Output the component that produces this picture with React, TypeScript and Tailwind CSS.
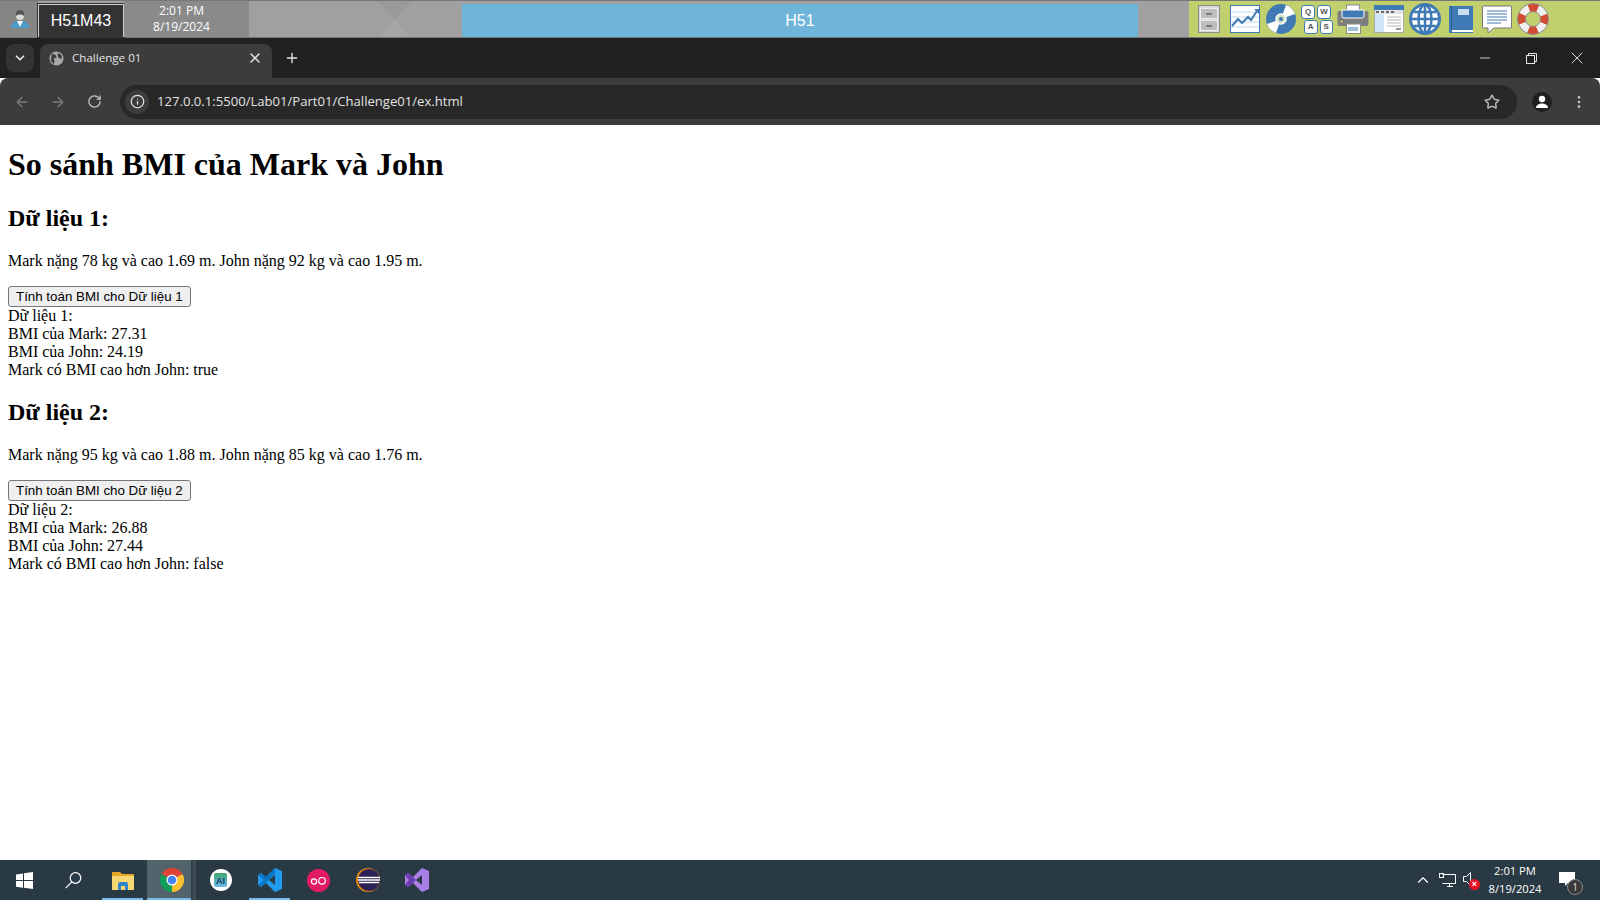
import { ChevronDown, X, Plus, ArrowLeft, ArrowRight, RotateCw, Info, Star, EllipsisVertical, Minus, ChevronUp } from "lucide-react";

const serif = "font-['Liberation_Serif','Times_New_Roman',serif]";
const sans = "font-['Liberation_Sans',Arial,sans-serif]";
const ui = "font-['Open_Sans','Noto_Sans',sans-serif]";

const UserIcon = () => (
  <svg width="18" height="20" viewBox="0 0 18 20">
    <path d="M0 19c0-4 2-6 6-7h6c4 1 6 3 6 7z" fill="#4c9cc9" />
    <path d="M6 12l3 6 3-6z" fill="#f4f4f4" />
    <circle cx="9" cy="7" r="4" fill="#d9d9d9" />
    <path d="M5 7c-1-4 1-6 4-6s5 2 4 6c-2-2-6-2-8 0z" fill="#555" />
  </svg>
);

const BarPattern = () => (
  <svg width="46" height="36" viewBox="0 0 46 36">
    <path d="M0 0h36L18 18z" fill="#999999" />
    <path d="M2 36L18 19l16 17z" fill="#a6a6a6" />
  </svg>
);

const CabinetIcon = () => (
  <svg width="22" height="28" viewBox="0 0 22 28">
    <rect x="0.500" y="0.500" width="21" height="27" fill="#d9d9d9" stroke="#8a8a8a" />
    <rect x="2.500" y="3.500" width="17" height="10" fill="#bdbdbd" stroke="#eee" />
    <rect x="2.500" y="15.500" width="17" height="10" fill="#bdbdbd" stroke="#eee" />
    <rect x="8" y="8" width="6" height="2" rx="1" fill="#777" />
    <rect x="8" y="20" width="6" height="2" rx="1" fill="#777" />
  </svg>
);

const ChartIcon = () => (
  <svg width="30" height="28" viewBox="0 0 30 28">
    <rect x="0.500" y="0.500" width="29" height="27" fill="#fff" stroke="#3f7ab5" />
    <path d="M1 7h28M1 12h28M1 17h28M1 22h28" stroke="#c3d8ea" />
    <path d="M2 21l6-7 4 4 6-6 3 3 6-9" fill="none" stroke="#3f7ab5" strokeWidth="2" />
    <path d="M24 4h5v5z" fill="#3f7ab5" />
  </svg>
);

const DiscIcon = () => (
  <svg width="30" height="30" viewBox="0 0 30 30">
    <circle cx="15" cy="15" r="15" fill="#3f7ab5" />
    <path d="M15 15L20 1a15 15 0 0 1 9 9zM15 15L1 20a15 15 0 0 0 9 9z" fill="#fff" />
    <circle cx="15" cy="15" r="5" fill="#cfe2c0" stroke="#fff" strokeWidth="1.500" />
    <circle cx="15" cy="15" r="2" fill="#3f7ab5" />
  </svg>
);

const KeyCap = ({ label }: { label: string }) => (
  <div className={`flex h-[14px] w-[14px] items-center justify-center rounded-[3px] border border-[#3f7ab5] bg-white text-[8px] font-bold text-[#555] ${sans}`}>
    {label}
  </div>
);

const KeysIcon = () => (
  <div className="flex w-[32px] flex-col gap-[1px]">
    <div className="flex gap-[2px]">
      <KeyCap label="Q" />
      <KeyCap label="W" />
    </div>
    <div className="flex gap-[2px] pl-[3px]">
      <KeyCap label="A" />
      <KeyCap label="S" />
    </div>
  </div>
);

const PrinterIcon = () => (
  <svg width="32" height="30" viewBox="0 0 32 30">
    <rect x="9.500" y="1" width="13" height="8" fill="#fff" stroke="#8a8a8a" />
    <rect x="0.500" y="7" width="31" height="15" rx="2" fill="#7d7d7d" />
    <path d="M5 6h22v6a2 2 0 0 1-2 2H7a2 2 0 0 1-2-2z" fill="#3f7ab5" stroke="#fff" />
    <rect x="3" y="17" width="3" height="1" fill="#d8d040" />
    <rect x="9.500" y="20" width="14" height="9.500" fill="#fff" stroke="#8a8a8a" />
    <path d="M11 24h10M11 26h10" stroke="#3f7ab5" />
  </svg>
);

const WindowIcon = () => (
  <svg width="30" height="28" viewBox="0 0 30 28">
    <rect x="0.500" y="0.500" width="29" height="27" fill="#fff" stroke="#aaa" />
    <rect x="0" y="0" width="30" height="5" fill="#3f7ab5" />
    <rect x="1" y="5" width="28" height="4" fill="#e4e4e4" />
    <path d="M2 6h3v2H2zM7 6h3v2H7zM12 6h3v2h-3zM17 6h3v2h-3z" fill="#666" />
    <rect x="1" y="9" width="9" height="18" fill="#cfe6f7" />
    <path d="M13 12h14M13 15h14M13 18h14M13 21h14" stroke="#b5b5b5" />
    <rect x="22" y="23" width="5" height="2" fill="#999" />
  </svg>
);

const GlobeIcon = () => (
  <svg width="32" height="32" viewBox="0 0 32 32">
    <circle cx="16" cy="16" r="14.500" fill="#fff" stroke="#3f7ab5" strokeWidth="3" />
    <ellipse cx="16" cy="16" rx="6.500" ry="14" fill="none" stroke="#3f7ab5" strokeWidth="2.500" />
    <path d="M16 2v28M2 16h28M5 9h22M5 23h22" stroke="#3f7ab5" strokeWidth="2.500" />
  </svg>
);

const BookIcon = () => (
  <svg width="24" height="28" viewBox="0 0 24 28">
    <path d="M0 1h24v24H3v2h21v1H0z" fill="#3f7ab5" />
    <rect x="2" y="1" width="1" height="24" fill="#2c5f92" />
    <rect x="3" y="25" width="21" height="2" fill="#fff" />
    <rect x="9" y="4" width="11" height="6" fill="#c9dff0" />
  </svg>
);

const MessageIcon = () => (
  <svg width="30" height="28" viewBox="0 0 30 28">
    <path d="M1.500 1h27a1 1 0 0 1 1 1v20a1 1 0 0 1-1 1H12l-6 5v-5H1.500a1 1 0 0 1-1-1V2a1 1 0 0 1 1-1z" fill="#fff" stroke="#777" />
    <path d="M5 6h20M5 9h20M5 12h20M5 15h20M5 18h14" stroke="#3f7ab5" />
  </svg>
);

const LifebuoyIcon = () => (
  <svg width="32" height="32" viewBox="0 0 32 32">
    <circle cx="16" cy="16" r="11.500" fill="none" stroke="#f0f0f0" strokeWidth="8" />
    <circle cx="16" cy="16" r="11.500" fill="none" stroke="#d34b2e" strokeWidth="8" strokeDasharray="9 9.060" strokeDashoffset="4.500" />
    <circle cx="16" cy="16" r="15.500" fill="none" stroke="#8a8a8a" />
    <circle cx="16" cy="16" r="7.500" fill="none" stroke="#8a8a8a" />
  </svg>
);

const GlobeTab = () => (
  <svg width="15" height="15" viewBox="0 0 16 16">
    <circle cx="8" cy="8" r="7.500" fill="#a6a8aa" />
    <path d="M3 3l4 1 1 3-3 1 1 3-1 3-3-4zM10 2l3 2 1 4-3 0-2-3z" fill="#3c3c3c" />
  </svg>
);

const ProfileIcon = () => (
  <div className="flex h-[20px] w-[20px] items-center justify-center rounded-full bg-[#1f1f1f]">
    <svg width="14" height="14" viewBox="0 0 14 14">
      <circle cx="7" cy="4" r="3.200" fill="#fff" />
      <path d="M1 13c0-3 3-4.500 6-4.500s6 1.500 6 4.500z" fill="#fff" />
    </svg>
  </div>
);

const RestoreIcon = () => (
  <svg width="11" height="11" viewBox="0 0 11 11" fill="none" stroke="#e6e6e6">
    <rect x="0.500" y="2.500" width="8" height="8" />
    <path d="M2.500 2.500V0.500h8v8H8.500" />
  </svg>
);

const WindowsLogo = () => (
  <svg width="17" height="17" viewBox="0 0 17 17" fill="#fff">
    <path d="M0 2.400l7-1v6.700H0zM8 1.300L17 0v8.100H8zM0 9h7v6.700l-7-1zM8 9h9v8l-9-1.300z" />
  </svg>
);

const SearchIcon = () => (
  <svg width="17" height="17" viewBox="0 0 17 17" fill="none" stroke="#fff" strokeWidth="1.200">
    <circle cx="10.500" cy="6" r="5.300" />
    <path d="M6.800 9.800L0.700 16.200" />
  </svg>
);

const FolderIcon = () => (
  <svg width="22" height="19" viewBox="0 0 22 19">
    <path d="M0 2a1 1 0 0 1 1-1h7l2 2h11a1 1 0 0 1 1 1v14a1 1 0 0 1-1 1H1a1 1 0 0 1-1-1z" fill="#e9a827" />
    <path d="M0 5h22v13a1 1 0 0 1-1 1H1a1 1 0 0 1-1-1z" fill="#f8d775" />
    <path d="M6 19v-6a2 2 0 0 1 2-2h6a2 2 0 0 1 2 2v6h-3v-4H9v4z" fill="#2f86c9" />
  </svg>
);

const ChromeIcon = () => (
  <svg width="24" height="24" viewBox="0 0 24 24">
    <path d="M12 12L1.600 6A12 12 0 0 1 22.400 6z" fill="#db4437" />
    <path d="M12 12L22.400 6A12 12 0 0 1 12 24z" fill="#fbc02d" />
    <path d="M12 12L12 24A12 12 0 0 1 1.600 6z" fill="#0f9d58" />
    <circle cx="12" cy="12" r="5.500" fill="#fff" />
    <circle cx="12" cy="12" r="4.300" fill="#4285f4" />
  </svg>
);

const AiStudioIcon = () => (
  <div className={`flex h-[22px] w-[22px] items-center justify-center rounded-full bg-white ${sans}`}>
    <div className="flex h-[14px] w-[13px] items-end justify-center rounded-[2px] bg-gradient-to-b from-[#3fa66b] to-[#6fb7e8] text-[9px] leading-[11px] font-bold text-[#123c85]">AI</div>
  </div>
);

const VsCodeIcon = () => (
  <svg width="24" height="24" viewBox="0 0 24 24">
    <path d="M17 0l7 3v18l-7 3-9-9-5 4-3-2V7l3-2 5 4z" fill="#1f9cf0" />
    <path d="M17 7l-6 5 6 5z" fill="#2b3a44" />
    <path d="M17 0v6L8 15l-5 4-3-2 6-5-6-5 3-2 5 4z" fill="#0a76c4" />
  </svg>
);

const DotsAppIcon = () => (
  <svg width="23" height="23" viewBox="0 0 23 23">
    <circle cx="11.500" cy="11.500" r="11.500" fill="#e31b65" />
    <circle cx="7" cy="12.500" r="2.600" fill="none" stroke="#fff" strokeWidth="1.200" />
    <circle cx="15" cy="11.800" r="3.300" fill="none" stroke="#fff" strokeWidth="1.200" />
  </svg>
);

const EclipseIcon = () => (
  <svg width="24" height="24" viewBox="0 0 24 24">
    <circle cx="12" cy="12" r="12" fill="#e8890c" />
    <circle cx="13" cy="12" r="11" fill="#2c2255" />
    <path d="M2 9.500h22M2 12h22M3 14.500h20" stroke="#fff" strokeWidth="1.500" />
  </svg>
);

const VisualStudioIcon = () => (
  <svg width="24" height="24" viewBox="0 0 24 24">
    <path d="M17 0l7 3v18l-7 3-9-9-5 4-3-2V7l3-2 5 4z" fill="#a77fe6" />
    <path d="M17 7l-6 5 6 5z" fill="#2b3a44" />
    <path d="M0 7l3-2 5 4 3 3-3 3-5 4-3-2 4-5z" fill="#6a3bb0" />
  </svg>
);

const NetworkIcon = () => (
  <svg width="17" height="15" viewBox="0 0 17 15" fill="none" stroke="#fff">
    <path d="M3.500 1.500h13v9h-13M8 13.500h6M10.500 10.500v3" />
    <rect x="0.500" y="0.500" width="4" height="4" />
  </svg>
);

const MutedIcon = () => (
  <div className="relative h-[16px] w-[17px]">
    <svg width="10" height="14" viewBox="0 0 10 14" fill="none" stroke="#fff">
      <path d="M0.500 4.500h3l4-4v13l-4-4h-3z" />
    </svg>
    <div className={`absolute right-0 bottom-[-2px] flex h-[11px] w-[11px] items-center justify-center rounded-full bg-[#e81123] text-[9px] leading-none font-bold text-white ${sans}`}>
      ×
    </div>
  </div>
);

const TaskbarSlot = ({ children, active, open }: { children: React.ReactNode; active?: boolean; open?: boolean }) => (
  <div className={`relative flex h-full w-[49px] shrink-0 items-center justify-center ${active ? "bg-[#53636b]" : ""}`}>
    {children}
    {open && <div className="absolute inset-x-[4px] bottom-0 h-[2px] bg-[#76b9ed]" />}
    {active && <div className="absolute inset-x-0 bottom-0 h-[2px] bg-[#76b9ed]" />}
    {active && <div className="absolute inset-y-0 right-[3px] w-[2px] bg-[#333f47]" />}
    {active && <div className="absolute inset-y-0 right-0 w-[3px] bg-[#3d4c55]" />}
  </div>
);

const DataSection = ({ title, text, button, result }: { title: string; text: string; button: string; result: string[] }) => (
  <section>
    <h2 className="mt-[19.92px] mb-[19.92px] text-[24px] leading-[27px] font-bold">{title}</h2>
    <p className="my-4 text-base leading-[18px]">{text}</p>
    <button className={`block h-[21px] rounded-[3px] border border-[#767676] bg-[#efefef] px-[7px] text-[13.33px] leading-[15px] text-black ${sans}`}>
      {button}
    </button>
    <div className="text-base leading-[18px]">
      {result.map((line) => (
        <div key={line}>{line}</div>
      ))}
    </div>
  </section>
);

export default function App() {
  return (
    <div className="flex h-[900px] w-[1600px] flex-col overflow-hidden bg-white">
      {/* remote desktop bar */}
      <div className={`flex h-[38px] shrink-0 border-y border-y-[#777] bg-[#a0a0a0] ${ui}`}>
        <div className="flex h-full w-[38px] items-center justify-center bg-[#858585] pl-[2px]">
          <UserIcon />
        </div>
        <div className={`mt-[3px] flex h-[33px] w-[86px] items-center justify-center border-x border-t border-[#d0d0d0] bg-[#333] text-[16px] text-white outline outline-[#333] ${sans}`}>
          H51M43
        </div>
        <div className="flex w-[125px] flex-col items-center justify-center bg-[#8a8a8a] pr-[10px] text-[12px] leading-[16px] text-white">
          <span>2:01 PM</span>
          <span>8/19/2024</span>
        </div>
        <div className="flex w-[213px] pl-[128px]">
          <BarPattern />
        </div>
        <div className={`mt-[3px] flex h-[33px] w-[676px] items-center justify-center bg-[#6fb5da] text-[16px] text-white ${sans}`}>
          H51
        </div>
        <div className="w-[51px]" />
        <div className="flex flex-1 items-center bg-[#c2cf6d] pl-[9px]">
          <CabinetIcon />
          <div className="ml-[10px]"><ChartIcon /></div>
          <div className="ml-[6px]"><DiscIcon /></div>
          <div className="ml-[5px]"><KeysIcon /></div>
          <div className="ml-[4px]"><PrinterIcon /></div>
          <div className="ml-[5px]"><WindowIcon /></div>
          <div className="ml-[5px]"><GlobeIcon /></div>
          <div className="ml-[8px]"><BookIcon /></div>
          <div className="ml-[9px]"><MessageIcon /></div>
          <div className="ml-[5px]"><LifebuoyIcon /></div>
        </div>
      </div>

      {/* tab strip */}
      <div className={`flex h-[40px] shrink-0 items-end bg-[#202221] pl-[6px] ${ui}`}>
        <div className="mb-[6px] flex h-[28px] w-[28px] items-center justify-center rounded-lg bg-[#333]">
          <ChevronDown size={14} strokeWidth={3} color="#e3e3e3" />
        </div>
        <div className="ml-[6px] flex h-[34px] w-[232px] items-center rounded-t-lg bg-[#3c3c3c] pr-[9px] pb-[6px] pl-[9px] text-[11.600px] text-[#e3e3e3]">
          <GlobeTab />
          <span className="ml-[8px]">Challenge 01</span>
          <X size={16} strokeWidth={2.200} color="#e3e3e3" className="ml-auto" />
        </div>
        <Plus size={16} strokeWidth={2} color="#e3e3e3" className="mb-[12px] ml-[12px]" />
        <div className="mb-[10px] ml-auto flex items-center">
          <div className="flex w-[46px] justify-center"><Minus size={16} strokeWidth={1.300} color="#e6e6e6" /></div>
          <div className="flex w-[46px] justify-center"><RestoreIcon /></div>
          <div className="flex w-[46px] justify-center"><X size={20} strokeWidth={1.100} color="#e6e6e6" /></div>
        </div>
      </div>

      {/* toolbar */}
      <div className={`flex h-[47px] shrink-0 items-center rounded-t-lg bg-[#3c3c3c] pr-[13px] pl-[14px] ${ui}`}>
        <ArrowLeft size={16} color="#7a7a7a" />
        <ArrowRight size={16} color="#7a7a7a" className="ml-[20px]" />
        <RotateCw size={15} color="#c7c7c7" className="ml-[21px]" />
        <div className="ml-[18px] flex h-[34px] flex-1 items-center rounded-full bg-[#282828] pr-[17px] pl-[5px]">
          <div className="flex h-[24px] w-[24px] items-center justify-center rounded-full bg-[#3c3c3c]">
            <Info size={15} color="#e3e3e3" />
          </div>
          <span className="ml-[8px] text-[13.100px] text-[#e3e3e3]">127.0.0.1:5500/Lab01/Part01/Challenge01/ex.html</span>
          <Star size={16} strokeWidth={2.200} color="#b8b8b8" className="ml-auto" />
        </div>
        <div className="ml-[15px]"><ProfileIcon /></div>
        <EllipsisVertical size={16} color="#c7c7c7" className="ml-[19px]" />
      </div>

      {/* page content */}
      <main className={`flex-1 px-2 text-black ${serif}`}>
        <h1 className="mt-[21.44px] mb-[21.44px] text-[32px] leading-[37px] font-bold">So sánh BMI của Mark và John</h1>
        <DataSection
          title="Dữ liệu 1:"
          text="Mark nặng 78 kg và cao 1.69 m. John nặng 92 kg và cao 1.95 m."
          button="Tính toán BMI cho Dữ liệu 1"
          result={["Dữ liệu 1:", "BMI của Mark: 27.31", "BMI của John: 24.19", "Mark có BMI cao hơn John: true"]}
        />
        <DataSection
          title="Dữ liệu 2:"
          text="Mark nặng 95 kg và cao 1.88 m. John nặng 85 kg và cao 1.76 m."
          button="Tính toán BMI cho Dữ liệu 2"
          result={["Dữ liệu 2:", "BMI của Mark: 26.88", "BMI của John: 27.44", "Mark có BMI cao hơn John: false"]}
        />
      </main>

      {/* taskbar */}
      <div className={`flex h-[40px] shrink-0 items-center bg-[#2a3a44] ${ui}`}>
        <div className="flex h-full w-[48px] items-center justify-center"><WindowsLogo /></div>
        <div className="flex h-full w-[50px] items-center justify-center">
          <SearchIcon />
        </div>
        <TaskbarSlot open><FolderIcon /></TaskbarSlot>
        <TaskbarSlot active><ChromeIcon /></TaskbarSlot>
        <TaskbarSlot><AiStudioIcon /></TaskbarSlot>
        <TaskbarSlot open><VsCodeIcon /></TaskbarSlot>
        <TaskbarSlot><DotsAppIcon /></TaskbarSlot>
        <TaskbarSlot><EclipseIcon /></TaskbarSlot>
        <TaskbarSlot><VisualStudioIcon /></TaskbarSlot>
        <div className="ml-auto flex h-full items-center text-white">
          <ChevronUp size={18} strokeWidth={1.500} color="#fff" />
          <div className="ml-[7px]"><NetworkIcon /></div>
          <div className="ml-[7px]"><MutedIcon /></div>
          <div className="flex w-[70px] flex-col items-center text-[11.200px] leading-[18px]">
            <span>2:01 PM</span>
            <span>8/19/2024</span>
          </div>
          <div className="relative mr-[14px] ml-[4px] h-[22px] w-[32px]">
            <svg width="16" height="15" viewBox="0 0 16 15" className="absolute top-[3px] left-[5px]" fill="#fff">
              <path d="M0 0h16v11h-7l-3 3v-3H0z" />
            </svg>
            <div className="absolute right-[3px] bottom-[-4px] flex h-[16px] w-[16px] items-center justify-center rounded-full border border-[#8a8a8a] bg-[#3a3a3a] text-[10px] text-[#ddd]">1</div>
          </div>
        </div>
      </div>
    </div>
  );
}
